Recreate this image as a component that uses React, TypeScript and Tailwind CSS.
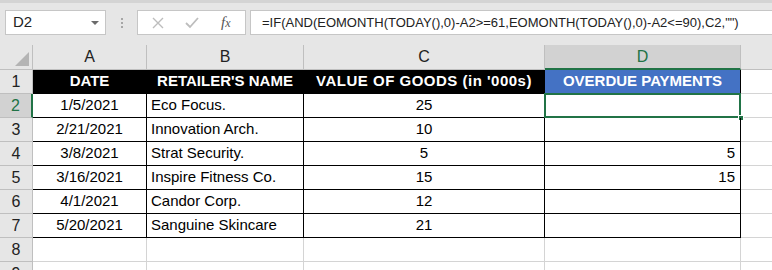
const cols = [
  { key: "A", w: "w-[114px]" },
  { key: "B", w: "w-[157px]" },
  { key: "C", w: "w-[241px]" },
  { key: "D", w: "w-[196px]" },
];

const rows = [
  { date: "1/5/2021", name: "Eco Focus.", value: "25", overdue: "" },
  { date: "2/21/2021", name: "Innovation Arch.", value: "10", overdue: "" },
  { date: "3/8/2021", name: "Strat Security.", value: "5", overdue: "5" },
  { date: "3/16/2021", name: "Inspire Fitness Co.", value: "15", overdue: "15" },
  { date: "4/1/2021", name: "Candor Corp.", value: "12", overdue: "" },
  { date: "5/20/2021", name: "Sanguine Skincare", value: "21", overdue: "" },
];

const formula = '=IF(AND(EOMONTH(TODAY(),0)-A2>=61,EOMONTH(TODAY(),0)-A2<=90),C2,"")';

function FormulaBar() {
  return (
    <div className="h-[45px] bg-[#e6e6e6] border-t-[3px] border-[#d4d4d4] flex items-start pt-[7px] pl-[5px]">
      <div className="shrink-0 w-[101px] h-[25px] bg-white border border-[#c6c6c6] flex items-center justify-between pl-[7px] pr-[5px]">
        <span className="text-[15px] text-[#222]">D2</span>
        <svg width="10" height="6" viewBox="0 0 10 6">
          <path d="M1 1h8L5 5z" fill="#6b6b6b" />
        </svg>
      </div>
      <div className="shrink-0 w-[31px] h-[25px] flex flex-col items-center justify-center gap-[2px]">
        <span className="w-[2px] h-[2px] bg-[#a6a6a6]" />
        <span className="w-[2px] h-[2px] bg-[#a6a6a6]" />
        <span className="w-[2px] h-[2px] bg-[#a6a6a6]" />
      </div>
      <div className="shrink-0 w-[109px] h-[25px] bg-white border border-[#c6c6c6] flex items-center">
        <svg width="12" height="12" viewBox="0 0 12 12" className="ml-[14px]">
          <path d="M1 1l10 10M11 1L1 11" stroke="#bdbdbd" strokeWidth="1.4" />
        </svg>
        <svg width="14" height="12" viewBox="0 0 14 12" className="ml-[21px]">
          <path d="M1 6l4 4 8-9" stroke="#bdbdbd" strokeWidth="1.8" fill="none" />
        </svg>
        <span className="ml-[22px] text-[15px] italic text-[#555] font-['Liberation_Serif',serif]">
          f<span className="text-[12px]">x</span>
        </span>
      </div>
      <div className="flex-1 min-w-0 overflow-hidden ml-[4px] h-[25px] bg-white border border-[#c6c6c6] border-r-0 flex items-center pl-[11px]">
        <span className="text-[13px] text-[#222] whitespace-nowrap">{formula}</span>
      </div>
    </div>
  );
}

function ColumnHeaders() {
  return (
    <div className="flex h-[25px]">
      <div className="shrink-0 w-[33px] bg-[#e6e6e6] border-r border-b border-[#bfbfbf] relative">
        <svg width="14" height="14" viewBox="0 0 14 14" className="absolute right-[3px] bottom-[3px]">
          <path d="M14 0V14H0z" fill="#b4b4b4" />
        </svg>
      </div>
      {cols.map((c) =>
        c.key === "D" ? (
          <div
            key={c.key}
            className={`${c.w} shrink-0 bg-[#d2d2d2] border-r border-[#bfbfbf] border-b-2 border-b-[#217346] flex items-center justify-center text-[16px] text-[#217346]`}
          >
            {c.key}
          </div>
        ) : (
          <div
            key={c.key}
            className={`${c.w} shrink-0 bg-[#e6e6e6] border-r border-b border-[#bfbfbf] flex items-center justify-center text-[16px] text-[#222]`}
          >
            {c.key}
          </div>
        )
      )}
      <div className="flex-1 bg-[#e6e6e6] border-b border-[#bfbfbf]" />
    </div>
  );
}

function RowHeader({ n, active }: { n: number; active?: boolean }) {
  return active ? (
    <div className="shrink-0 w-[33px] bg-[#d2d2d2] border-b border-[#bfbfbf] border-r-2 border-r-[#217346] flex items-center justify-center text-[16px] text-[#217346]">
      {n}
    </div>
  ) : (
    <div className="shrink-0 w-[33px] bg-[#e6e6e6] border-r border-b border-[#bfbfbf] flex items-center justify-center text-[16px] text-[#222]">
      {n}
    </div>
  );
}

function Extra() {
  return <div className="flex-1 border-b border-[#d4d4d4]" />;
}

export default function App() {
  return (
    <div className="w-[772px] h-[270px] overflow-hidden bg-white font-['Liberation_Sans',Arial,sans-serif]">
      <FormulaBar />
      <ColumnHeaders />

      <div className="flex h-[24px]">
        <RowHeader n={1} />
        <div className="shrink-0 w-[114px] bg-black border-r border-b border-black flex items-center justify-center text-white font-bold text-[15px]">DATE</div>
        <div className="shrink-0 w-[157px] bg-black border-r border-b border-black flex items-center justify-center text-white font-bold text-[15px]">RETAILER'S NAME</div>
        <div className="shrink-0 w-[241px] bg-black border-r border-b border-black flex items-center justify-center text-white font-bold text-[15px] tracking-[0.5px]">VALUE OF GOODS (in '000s)</div>
        <div className="shrink-0 w-[196px] bg-[#4472c4] border-r border-b border-black flex items-center justify-center text-white font-bold text-[15px]">OVERDUE PAYMENTS</div>
        <Extra />
      </div>

      {rows.map((r, i) => (
        <div key={i} className="flex h-[24px]">
          <RowHeader n={i + 2} active={i === 0} />
          <div className="shrink-0 w-[114px] border-r border-b border-black flex items-center justify-center text-[15px] text-black">{r.date}</div>
          <div className="shrink-0 w-[157px] border-r border-b border-black flex items-center pl-[4px] text-[15px] text-black">{r.name}</div>
          <div className="shrink-0 w-[241px] border-r border-b border-black flex items-center justify-center text-[15px] text-black">{r.value}</div>
          <div className="shrink-0 w-[196px] border-r border-b border-black flex items-center justify-end pr-[5px] text-[15px] text-black relative">
            {r.overdue}
            {i === 0 && (
              <>
                <div className="absolute left-[-1px] top-[-1px] right-[-1px] bottom-[-1px] border-2 border-[#217346]" />
                <div className="absolute right-[-4px] bottom-[-4px] w-[6px] h-[6px] bg-[#217346] border border-white" />
              </>
            )}
          </div>
          <Extra />
        </div>
      ))}

      {[8, 9].map((n) => (
        <div key={n} className="flex h-[24px]">
          <RowHeader n={n} />
          {cols.map((c) => (
            <div key={c.key} className={`${c.w} shrink-0 border-r border-b border-[#d4d4d4]`} />
          ))}
          <Extra />
        </div>
      ))}
    </div>
  );
}
